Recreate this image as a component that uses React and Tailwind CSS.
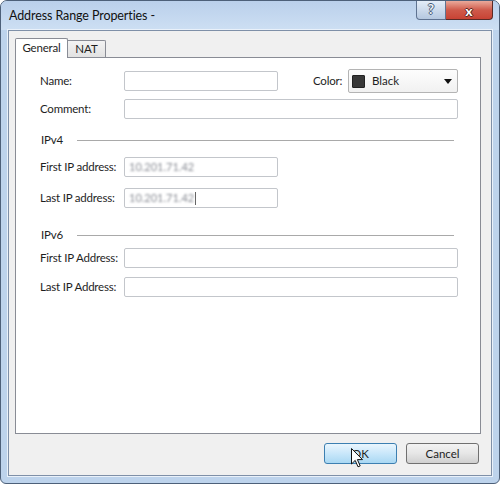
export default function App() {
  const font = { fontFamily: '"Segoe UI", Lato, "Liberation Sans", sans-serif' };

  const label = "w-[84px] shrink-0 whitespace-nowrap text-[11.5px] tracking-[-0.2px] text-[#1e1e1e]";
  const input = "h-[20px] border border-[#c3c6cb] rounded-[2px] bg-white flex items-center pl-[4px]";

  const Blurred = ({ value, caret }) => (
    <span className="flex items-center">
      <span className="text-[11px] text-[#8a8d95] blur-[1px]">{value}</span>
      {caret && <span className="ml-[1px] w-[1px] h-[13px] bg-[#666] blur-[0.6px]" />}
    </span>
  );

  const Section = ({ title }) => (
    <div className="flex items-center h-[14px] pl-[1px] pr-[26px]">
      <span className="text-[11.5px] tracking-[-0.2px] text-[#1e1e1e] w-[36px] shrink-0">{title}</span>
      <div className="flex-1 border-t border-[#a9a9a9] shadow-[0_1px_0_#ffffff]" />
    </div>
  );

  return (
    <div className="w-[500px] h-[484px] bg-white" style={font}>
      <div className="w-[500px] h-[484px] border border-[#4d6079] rounded-t-[7px] rounded-b-[6px] bg-[#bdd3ec] flex flex-col overflow-hidden">
        {/* title bar */}
        <div className="h-[29px] shrink-0 flex items-start bg-gradient-to-b from-[#bad0eb] to-[#cddff3] pr-[6px]">
          <span className="pl-[8px] pt-[6px] text-[12.5px] tracking-[-0.1px] text-[#111]">Address Range Properties -</span>
          <div className="ml-auto flex">
            <div className="w-[30px] h-[19px] border border-t-0 border-[#5f7391] rounded-bl-[4px] bg-gradient-to-b from-[#e4edf8] to-[#b5c8e0] flex items-center justify-center">
              <span className="text-[13px] font-bold text-[#eef2f7] [text-shadow:1px_0_0_#4a5d78,-1px_0_0_#4a5d78,0_1px_0_#4a5d78,0_-1px_0_#4a5d78]">?</span>
            </div>
            <div className="w-[47px] h-[19px] border border-t-0 border-l-0 border-[#5a2a26] rounded-br-[4px] bg-gradient-to-b from-[#e9a99b] via-[#cf5a4b] to-[#c84234] flex items-center justify-center">
              <span className="text-[14px] font-bold text-white [text-shadow:1px_0_0_#5a241e,-1px_0_0_#5a241e,0_1px_0_#5a241e,0_-1px_0_#5a241e]">x</span>
            </div>
          </div>
        </div>

        {/* client */}
        <div className="flex-1 mx-[7px] mb-[7px] border border-[#7f90a8] shadow-[0_0_0_1px_#e9f1fa] bg-[#f0f0f0] flex flex-col pt-[7px] pl-[6px] pr-[10px]">
          {/* tabs */}
          <div className="h-[19px] flex items-end relative z-10">
            <div className="w-[53px] h-[20px] -mb-px border border-b-0 border-[#898c95] bg-white rounded-t-[2px] flex items-center justify-center pb-[1px]">
              <span className="text-[11.5px] tracking-[-0.2px] text-[#1e1e1e]">General</span>
            </div>
            <div className="w-[38px] h-[17px] border border-l-0 border-b-0 border-[#898c95] bg-gradient-to-b from-[#f3f3f3] to-[#e2e2e2] rounded-tr-[2px] flex items-center justify-center">
              <span className="text-[11.5px] text-[#1e1e1e]">NAT</span>
            </div>
          </div>

          {/* panel */}
          <div className="h-[377px] border border-[#898c95] bg-white pt-[11px] pl-[24px]">
            <div className="flex items-center h-[24px]">
              <span className={label}>Name:</span>
              <div className={`${input} w-[154px]`} />
              <span className="ml-[35px] w-[35px] text-[11.5px] tracking-[-0.2px] text-[#1e1e1e]">Color:</span>
              <div className="w-[110px] h-[24px] border border-[#b4b4b4] rounded-[2px] bg-gradient-to-b from-[#fdfdfd] to-[#f1f1f1] flex items-center pl-[3px] pr-[5px]">
                <div className="w-[13px] h-[13px] bg-[#383838] border border-[#222] rounded-[1px]" />
                <span className="ml-[7px] text-[11.5px] text-[#1e1e1e]">Black</span>
                <svg className="ml-auto" width="8" height="5" viewBox="0 0 8 5">
                  <path d="M0 0 H8 L4 5 Z" fill="#111" />
                </svg>
              </div>
            </div>

            <div className="flex items-center h-[20px] mt-[6px]">
              <span className={label}>Comment:</span>
              <div className={`${input} w-[334px]`} />
            </div>

            <div className="mt-[14px]">
              <Section title="IPv4" />
            </div>

            <div className="flex items-center h-[20px] mt-[10px]">
              <span className={label}>First IP address:</span>
              <div className={`${input} w-[154px]`}>
                <Blurred value="10.201.71.42" />
              </div>
            </div>

            <div className="flex items-center h-[20px] mt-[11px]">
              <span className={label}>Last IP address:</span>
              <div className={`${input} w-[154px] border-[#7fa6d4]`}>
                <Blurred value="10.201.71.42" caret />
              </div>
            </div>

            <div className="mt-[20px]">
              <Section title="IPv6" />
            </div>

            <div className="flex items-center h-[20px] mt-[6px]">
              <span className={label}>First IP Address:</span>
              <div className={`${input} w-[334px]`} />
            </div>

            <div className="flex items-center h-[20px] mt-[9px]">
              <span className={label}>Last IP Address:</span>
              <div className={`${input} w-[334px]`} />
            </div>
          </div>

          {/* buttons */}
          <div className="flex justify-end gap-[9px] mt-[9px] pr-[2px]">
            <div className="relative w-[73px] h-[21px] border border-[#3c7fb1] rounded-[3px] bg-gradient-to-b from-[#eaf6fd] via-[#c9e7fa] to-[#a9d8f3] flex items-center justify-center">
              <span className="text-[11.5px] text-[#1e1e1e]">OK</span>
              <svg className="absolute left-[26px] top-[4px]" width="13" height="20" viewBox="0 0 13 20">
                <path d="M0.5 0.5 V16 L4.2 12.4 L7 18.8 L9.2 17.9 L6.4 11.6 H11.5 Z" fill="#fff" stroke="#111" strokeWidth="1" strokeLinejoin="round" />
              </svg>
            </div>
            <div className="w-[73px] h-[21px] border border-[#707070] rounded-[3px] bg-gradient-to-b from-[#f3f3f3] via-[#e6e6e6] to-[#d0d0d0] flex items-center justify-center">
              <span className="text-[11.5px] text-[#1e1e1e]">Cancel</span>
            </div>
          </div>
        </div>
      </div>
    </div>
  );
}
